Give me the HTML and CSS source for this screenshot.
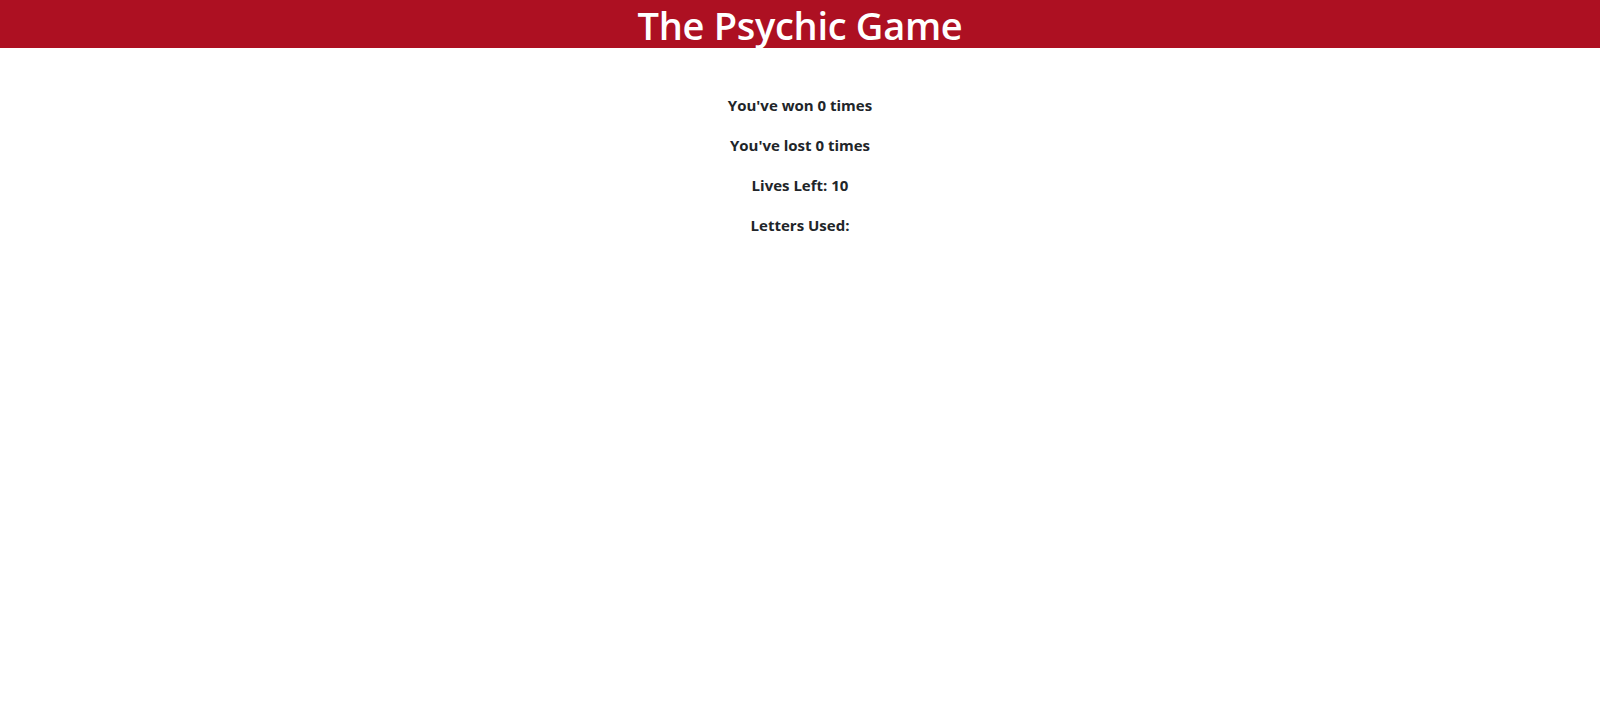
FILE: index.html
```html
<!DOCTYPE html>
<html lang="en">
<head>
<meta charset="utf-8">
<title>The Psychic Game</title>
<link rel="stylesheet" href="styles.css">
</head>
<body>
<header class="banner">
  <h1 class="title">The Psychic Game</h1>
</header>
<main class="stats">
  <p class="stat">You've won 0 times</p>
  <p class="stat">You've lost 0 times</p>
  <p class="stat">Lives Left: 10</p>
  <p class="stat">Letters Used:</p>
</main>
</body>
</html>
```

FILE: styles.css
```css
html, body {
  margin: 0;
  padding: 0;
  background: #fff;
}
body {
  font-family: "Open Sans", "Noto Sans", "Liberation Sans", sans-serif;
  color: #212529;
  font-size: 16px;
  line-height: 1.5;
}
.banner {
  background: #ad1022;
  height: 48px;
  display: flex;
  justify-content: center;
  align-items: center;
}
.title {
  margin: 0;
  color: #fff;
  font-size: 38px;
  font-weight: 600;
  line-height: 48px;
  letter-spacing: -0.3px;
  padding-top: 2px;
}
.stats {
  display: flex;
  flex-direction: column;
  align-items: center;
  padding-top: 45px;
}
.stat {
  margin: 0 0 16px;
  font-weight: 700;
  font-size: 15px;
  line-height: 24px;
}
```
